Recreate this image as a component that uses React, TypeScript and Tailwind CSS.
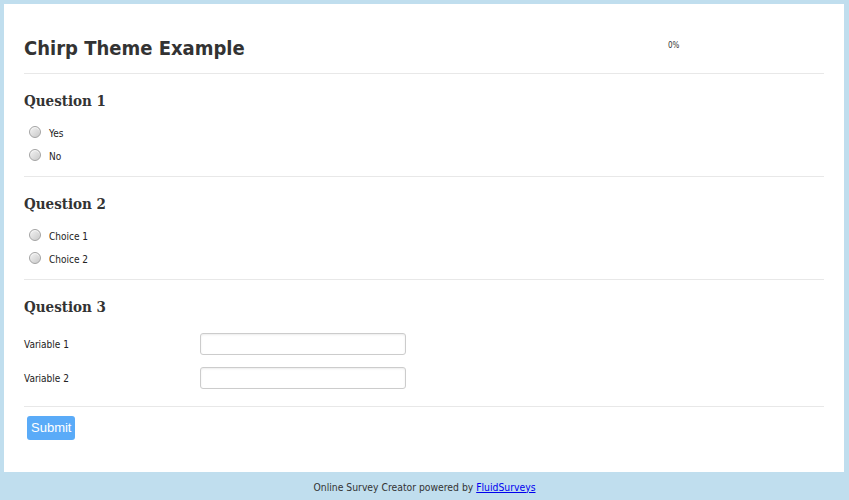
import React from "react";

const body = { fontFamily: '"DejaVu Sans Condensed", "DejaVu Sans", Tahoma, sans-serif' };
const serif = { fontFamily: '"DejaVu Serif Condensed", "DejaVu Serif", Cambria, Georgia, serif' };

function Radio({ label }: { label: string }) {
    return (
        <label className="flex items-center h-[23px] pl-[5px] cursor-pointer">
            <span className="w-[12px] h-[12px] rounded-full border border-[#a3a3a3] bg-gradient-to-br from-[#f4f4f4] to-[#c9c9c9] shadow-[inset_0_1px_1px_rgba(255,255,255,0.8)]" />
            <span className="ml-[8px] text-[10px] text-[#222] leading-none mt-[5px]" style={body}>{label}</span>
        </label>
    );
}

function Question({ title, options }: { title: string; options: string[] }) {
    return (
        <div className="pt-[17px] pb-[10px] border-b border-[#e8e8e8]">
            <h2 className="text-[15px] font-bold leading-[20px] text-[#333] mb-[9px]" style={serif}>{title}</h2>
            {options.map(o => <Radio key={o} label={o} />)}
        </div>
    );
}

function Field({ label }: { label: string }) {
    return (
        <div className="flex items-center">
            <span className="w-[176px] text-[10px] text-[#222]" style={body}>{label}</span>
            <input className="w-[206px] h-[22px] border border-[#cccccc] rounded-[3px] shadow-[inset_0_1px_2px_rgba(0,0,0,0.08)] bg-white px-1 text-xs outline-none" />
        </div>
    );
}

export default function App() {
    return (
        <div className="w-[849px] h-[500px] bg-[#c0deee] flex flex-col">
            <div className="mx-[4px] mt-[4px] h-[468px] bg-white px-[20px] mr-[5px]">
                {/* Header */}
                <div className="flex pt-[30px] pb-[11px] border-b border-[#e8e8e8]">
                    <h1 className="text-[20px] font-bold leading-[28px] text-[#333]" style={body}>Chirp Theme Example</h1>
                    <div className="ml-auto w-[156px] pt-[8px] text-[8px] leading-none text-[#333]" style={body}>0%</div>
                </div>

                <Question title="Question 1" options={["Yes", "No"]} />
                <Question title="Question 2" options={["Choice 1", "Choice 2"]} />

                <div className="pt-[17px] pb-[17px] border-b border-[#e8e8e8]">
                    <h2 className="text-[15px] font-bold leading-[20px] text-[#333] mb-[16px]" style={serif}>Question 3</h2>
                    <div className="flex flex-col gap-[12px]">
                        <Field label="Variable 1" />
                        <Field label="Variable 2" />
                    </div>
                </div>

                <div className="pt-[7px] pl-[3px]">
                    <button className="h-[24px] px-[4px] rounded-[3px] bg-[#5aabf8] text-white text-[13px] leading-none" style={{ fontFamily: '"Liberation Sans", Arial, sans-serif' }}>Submit</button>
                </div>
            </div>
            <div className="flex-1 flex items-center justify-center pt-[3px] text-[10.3px] text-[#333]" style={body}>
                Online Survey Creator powered by&nbsp;<a href="#" className="text-[#0000ee] underline">FluidSurveys</a>
            </div>
        </div>
    );
}
